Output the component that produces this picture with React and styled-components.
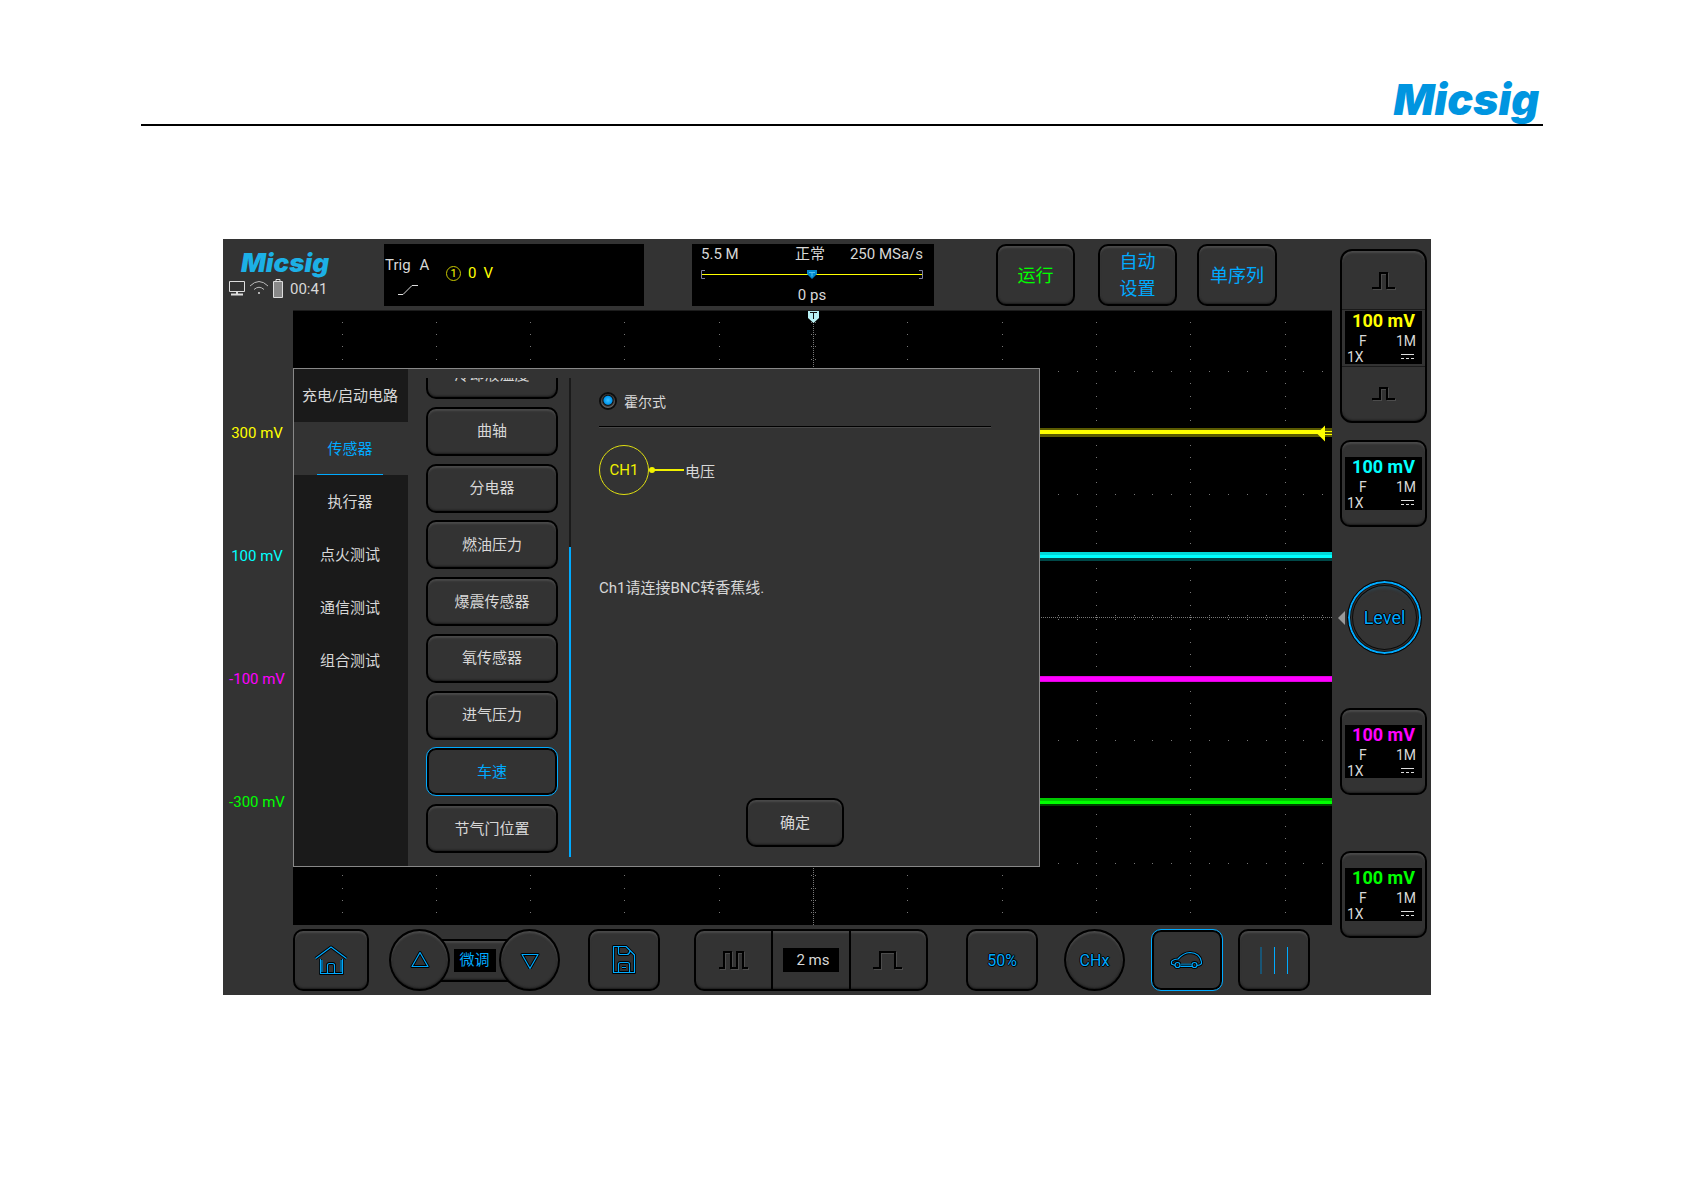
import React, { useState } from 'react';
import styled, { createGlobalStyle, css } from 'styled-components';

const colors = {
	accent: '#00aaff',
	panel: '#333333',
	dark: '#1a1a1a',
	text: '#d8d8d8',
	ch1: '#ffff00',
	ch2: '#00ffff',
	ch3: '#ff00ff',
	ch4: '#00ff00'
};

const GlobalStyle = createGlobalStyle`
	* {
		box-sizing: border-box;
	}

	body {
		margin: 0;
		background: #fff;
		font-family: Roboto, 'Noto Sans CJK SC', sans-serif;
		font-size: 15px;
		color: ${colors.text};
	}

	button {
		margin: 0;
		padding: 0;
		border: 0;
		background: none;
		font: inherit;
		color: inherit;
		cursor: pointer;
	}

	svg {
		display: block;
	}
`;

const Page = styled.div`
	padding: 77px 142px 196px 141px;
`;

const PageHeader = styled.header`
	display: flex;
	justify-content: flex-end;
	height: 49px;
	border-bottom: 2px solid #000;
	padding-right: 4px;
`;

const Logo = styled.div`
	font-family: Inter, sans-serif;
	font-weight: 900;
	font-style: italic;
	font-size: ${props => props.$small ? 26 : 43}px;
	line-height: ${props => props.$small ? 28 : 45}px;
	color: ${props => props.$small ? '#1cb0e6' : '#0095e0'};
`;

const Device = styled.main`
	display: grid;
	grid-template-columns: 70px 1fr 99px;
	grid-template-rows: 71px auto 70px;
	margin: 113px 112px 0 82px;
	background: ${colors.panel};
`;

/* top bar */

const TopBar = styled.header`
	grid-column: 1 / 3;
	display: flex;
	align-items: flex-start;
	padding-top: 5px;
`;

const Brand = styled.div`
	width: 161px;
	padding: 5px 0 0 6px;

	${Logo} {
		padding-left: 12px;
	}
`;

const Status = styled.div`
	display: flex;
	align-items: center;
	height: 22px;
	gap: 5px;

	span {
		padding: 2px 0 0 2px;
	}
`;

const Trigger = styled.section`
	display: flex;
	align-items: flex-start;
	width: 260px;
	height: 62px;
	padding-left: 1px;
	background: #000;
`;

const TriggerName = styled.div`
	width: 61px;
	padding-top: 12px;
	line-height: 18px;

	span {
		margin-left: 9px;
	}

	svg {
		margin: 10px 0 0 13px;
	}
`;

const TriggerLevel = styled.div`
	display: flex;
	align-items: center;
	gap: 7px;
	padding-top: 20px;
	line-height: 18px;
	color: ${colors.ch1};
`;

const Source = styled.span`
	width: 15px;
	height: 15px;
	border: 1px solid #c8c800;
	border-radius: 50%;
	font-size: 11px;
	line-height: 13px;
	text-align: center;
`;

const Timebase = styled.section`
	width: 242px;
	height: 62px;
	margin-left: 48px;
	padding: 1px 11px 0 9px;
	background: #000;
	text-align: center;
`;

const TimebaseRow = styled.div`
	display: grid;
	grid-template-columns: 1fr auto 1fr;
	line-height: 18px;

	span:first-child {
		text-align: left;
	}

	span:nth-child(2) {
		padding-right: 4px;
	}

	span:last-child {
		text-align: right;
	}
`;

const Offset = styled.div`
	line-height: 18px;
`;

const Position = styled.svg`
	width: 100%;
	height: 12px;
	margin: 6px 0 5px;
`;

/* raised key */

const raised = css`
	border: 2px solid #000;
	background: ${colors.panel};
	box-shadow: inset 0 2px 2px #4a4a4a, inset 0 -1px 2px #1c1c1c;
`;

const Key = styled.button`
	${raised}
	display: flex;
	align-items: center;
	justify-content: center;
	flex: none;
	width: ${props => props.$width || 72}px;
	height: ${props => props.$height || 62}px;
	margin-left: ${props => props.$gap || 0}px;
	border-radius: ${props => props.$round ? '50%' : '10px'};

	${props => props.$active && css`
		border: 1px solid ${colors.accent};
		box-shadow: inset 0 0 0 2px #000;
		color: ${colors.accent};
	`}
`;

const RunKey = styled(Key)`
	font-size: 18px;
	line-height: 27px;
	color: ${props => props.$run ? colors.ch4 : colors.accent};
`;

const SensorKey = styled(Key)`
	padding-bottom: 3px;
`;

const Outlined = styled.span`
	font-size: ${props => props.$large ? 18 : 16}px;
	color: ${colors.accent};
	text-shadow: 1px 0 #000, -1px 0 #000, 0 1px #000, 0 -1px #000;
`;

/* scope */

const Scale = styled.div`
	display: flex;
	flex-direction: column;
	justify-content: center;
	padding-right: 2px;
`;

const ScaleLabel = styled.div`
	height: 123px;
	line-height: 123px;
	text-align: center;
	color: ${props => colors[props.$ch]};
`;

const Screen = styled.section`
	position: relative;
	height: 615px;
	background: #000;
	overflow: hidden;
`;

const Wave = styled.svg`
	width: 100%;
	height: 100%;
`;

/* sensor dialog, lies over the screen */

const Dialog = styled.section`
	position: absolute;
	top: 58px;
	left: 0;
	display: flex;
	width: 747px;
	height: 499px;
	border: 1px solid #888;
	background: ${colors.panel};
`;

const Tabs = styled.nav`
	display: flex;
	flex-direction: column;
	width: 114px;
	background: ${colors.dark};
`;

const Tab = styled.button`
	display: flex;
	flex-direction: column;
	align-items: center;
	height: 53px;
	padding: 2px 2px 0 0;
	line-height: 51px;
	white-space: nowrap;

	${props => props.$active && css`
		background: ${colors.panel};
		color: ${colors.accent};

		&::after {
			content: '';
			flex: none;
			width: 66px;
			height: 1px;
			margin-top: -1px;
			background: ${colors.accent};
		}
	`}
`;

const SensorScroll = styled.div`
	display: flex;
	align-items: flex-end;
	height: 479px;
	margin: 9px 0 0 18px;
	overflow: hidden;
`;

const SensorList = styled.div`
	display: flex;
	flex-direction: column;
	justify-content: space-between;
	height: 507px;
	padding-bottom: 4px;
`;

const ScrollTrack = styled.div`
	display: flex;
	align-items: flex-end;
	width: 2px;
	height: 100%;
	margin-left: 11px;
	background: ${colors.dark};
`;

const ScrollThumb = styled.div`
	width: 100%;
	height: 310px;
	background: ${colors.accent};
`;

const Detail = styled.div`
	display: flex;
	flex-direction: column;
	flex: 1;
	padding: 24px 48px 19px 28px;
`;

const Choice = styled.label`
	display: flex;
	align-items: center;
	gap: 7px;
	height: 34px;
	padding-bottom: 17px;
	font-size: 14px;
	border-bottom: 1px solid #000;
	box-shadow: 0 1px #484848;
`;

const Radio = styled.input`
	appearance: none;
	width: 18px;
	height: 18px;
	margin: 0;
	border: 2px solid #0c0c0c;
	border-radius: 50%;
	background: radial-gradient(circle at 50% 45%, #3cc0ff 0, #0098f0 4px, #111 5px, #666 7px);
`;

const Wiring = styled.div`
	display: flex;
	align-items: center;
	margin-top: 18px;
	height: 50px;
`;

const Probe = styled.div`
	width: 50px;
	height: 50px;
	border: 1px solid #e0e010;
	border-radius: 50%;
	line-height: 48px;
	text-align: center;
	color: #f0f000;
`;

const Hint = styled.p`
	margin: 82px 0 0;
	line-height: 22px;
`;

const Confirm = styled(SensorKey)`
	margin: auto auto 0;
`;

/* channels on the right */

const Channels = styled.aside`
	grid-column: 3;
	grid-row: 1 / 4;
	display: flex;
	flex-direction: column;
	align-items: center;
	padding: 10px 4px 0 8px;
`;

const ChannelGroup = styled.div`
	${raised}
	display: flex;
	flex-direction: column;
	width: 87px;
	height: 174px;
	border-radius: 12px;
	overflow: hidden;
`;

const StepButton = styled.button`
	display: flex;
	flex: 1;
	align-items: center;
	justify-content: center;

	&:first-child {
		padding-top: 3px;
	}
`;

const ReadoutFrame = styled.div`
	display: flex;
	justify-content: center;
	padding: 1px 0 2px;
	border-top: 1px solid #1a1a1a;
	border-bottom: 1px solid #1a1a1a;
`;

const ReadoutBox = styled.div`
	width: 77px;
	height: 53px;
	background: #000;
	font-size: 14px;
`;

const Volts = styled.div`
	height: 22px;
	font-size: 18px;
	font-weight: 700;
	line-height: 19px;
	text-align: center;
	color: ${props => colors[props.$ch]};
`;

const ReadoutRow = styled.div`
	display: flex;
	align-items: center;
	justify-content: space-between;
	height: 16px;
	padding: ${props => props.$indent ? '0 6px 0 14px' : '0 8px 0 2px'};
`;

const LevelRow = styled.div`
	display: flex;
	align-items: center;
	align-self: flex-start;
	gap: 2px;
	margin: 53px 0 53px -2px;
`;

const LevelKnob = styled.button`
	width: 75px;
	height: 75px;
	border: 1px solid #000;
	border-radius: 50%;
	box-shadow: inset 0 0 0 2px ${colors.accent}, inset 0 0 0 3px #111, inset 0 0 0 4px #333, inset 0 0 0 5px #0a0a0a, inset 0 7px 3px #2d4450;
`;

const ChannelSlot = styled.div`
	margin-top: ${props => props.$gap}px;
`;

/* bottom bar */

const BottomBar = styled.footer`
	grid-column: 1 / 3;
	display: flex;
	align-items: flex-start;
	padding: 4px 0 0 70px;
`;

const Fine = styled.div`
	display: flex;
	align-items: center;
	margin-left: 20px;
`;

const FineLink = styled.div`
	${raised}
	display: flex;
	align-items: center;
	justify-content: center;
	width: 69px;
	height: 43px;
	margin: 0 -10px;
`;

const FineLabel = styled.span`
	width: 42px;
	height: 23px;
	line-height: 23px;
	text-align: center;
	background: #000;
	color: ${colors.accent};
`;

const FineKey = styled(Key)`
	position: relative;
`;

const SweepGroup = styled.div`
	${raised}
	display: flex;
	width: 234px;
	height: 62px;
	margin-left: 34px;
	border-radius: 10px;
`;

const SweepPart = styled.button`
	display: flex;
	flex: 1;
	align-items: center;
	justify-content: center;

	& + & {
		border-left: 2px solid #000;
	}
`;

const SweepValue = styled.span`
	width: 56px;
	height: 24px;
	padding-left: 4px;
	line-height: 24px;
	text-align: center;
	background: #000;
`;

// blue line drawing with a black edge round it
const Glyph = ({ width, height, d, faint }) => (
	<svg width={width} height={height} fill='none' strokeLinejoin='round'>
		<path d={d} stroke='#000' strokeWidth='3' />
		{faint && <path d={faint} stroke='#00608f' strokeWidth='2' />}
		<path d={d} stroke={colors.accent} strokeWidth='1.2' />
	</svg>
);

const Pulse = ({ width, height, d }) => (
	<svg width={width} height={height} fill='none'>
		<path d={d} stroke='#4c4c4c' strokeWidth='2' transform='translate(1 1)' />
		<path d={d} stroke='#000' strokeWidth='2' />
	</svg>
);

const Readout = ({ ch }) => (
	<ReadoutBox>
		<Volts $ch={ch}>100 mV</Volts>
		<ReadoutRow $indent><span>F</span><span>1M</span></ReadoutRow>
		<ReadoutRow>
			<span>1X</span>
			<svg width='13' height='6' stroke='#ddd'>
				<path d='M0 .5H13' />
				<path d='M0 4.5H13' strokeDasharray='3 2' />
			</svg>
		</ReadoutRow>
	</ReadoutBox>
);

const columns = [-5, -4, -3, -2, -1, 1, 2, 3, 4, 5].map(n => Math.round(520 + n * 94.3));
const rows = [-2, -1, 1, 2].map(n => Math.round(307 + n * 123));
const minorX = Array.from({ length: 55 }, (_, i) => Math.round(520 + (i - 27) * 18.86));
const minorY = Array.from({ length: 49 }, (_, i) => Math.round(307 + (i - 24) * 12.3));

const dot = (x, y) => `M${x} ${y}h1v1h-1z`;

const gridPath = [
	...columns.flatMap(x => minorY.map(y => dot(x, y))),
	...rows.flatMap(y => minorX.map(x => dot(x, y))),
	...minorY.map(y => dot(518, y) + dot(522, y)),
	...minorX.map(x => dot(x, 305) + dot(x, 309))
].join('');

const traces = [
	{ ch: 'ch1', y: 118, bands: [['#5a5a00', 0, 9], ['#ffff00', 2, 4]] },
	{ ch: 'ch2', y: 241, bands: [['#004848', 5, 5], ['#00d8d8', 1, 6], ['#00ffff', 4, 3]] },
	{ ch: 'ch3', y: 365, bands: [['#e000e0', 1, 6], ['#ff00ff', 2, 4]] },
	{ ch: 'ch4', y: 487, bands: [['#004000', 5, 4], ['#00c800', 1, 6], ['#00ff00', 4, 3]] }
];

const ScopeScreen = () => (
	<Wave viewBox='0 0 1039 615' preserveAspectRatio='none' shapeRendering='crispEdges'>
		<path d={gridPath} fill='#777' />
		<path d='M520.5 0V615M0 307.5H1039' stroke='#777' strokeDasharray='1 1' />
		{traces.map(({ ch, y, bands }) => (
			<g key={ch}>
				{bands.map(([fill, top, height]) => (
					<rect key={fill} x='0' y={y + top} width='1039' height={height} fill={fill} />
				))}
			</g>
		))}
		<path d='M1024 123.5l8 -8v16z' fill='#ffff00' shapeRendering='auto' />
		<path d='M1032 115h7v17h-7z' fill='#000' />
		<path d='M1032 118h7v9h-7z' fill='#5a5a00' />
		<path d='M1032 121.5h7M1032 124.5h7' stroke='#ffff00' />
		<path d='M515 0h11v8l-5.5 5l-5.5 -5z' fill='#b8f0f4' shapeRendering='auto' />
		<path d='M517 2.5h7M520.5 2.5V9' stroke='#111' />
		<path d='M0 .5H1039' stroke='#1c1c1c' />
	</Wave>
);

const categories = ['充电/启动电路', '传感器', '执行器', '点火测试', '通信测试', '组合测试'];
const sensors = ['冷却液温度', '曲轴', '分电器', '燃油压力', '爆震传感器', '氧传感器', '进气压力', '车速', '节气门位置'];

const SensorDialog = () => {
	const [category, setCategory] = useState('传感器');
	const [sensor, setSensor] = useState('车速');

	return (
		<Dialog>
			<Tabs>
				{categories.map(name => (
					<Tab key={name} $active={name === category} onClick={() => setCategory(name)}>{name}</Tab>
				))}
			</Tabs>
			<SensorScroll>
				<SensorList>
					{sensors.map(name => (
						<SensorKey key={name} $width={132} $height={49} $active={name === sensor} onClick={() => setSensor(name)}>
							{name}
						</SensorKey>
					))}
				</SensorList>
				<ScrollTrack><ScrollThumb /></ScrollTrack>
			</SensorScroll>
			<Detail>
				<Choice>
					<Radio type='radio' name='sensorType' defaultChecked />
					霍尔式
				</Choice>
				<Wiring>
					<Probe>CH1</Probe>
					<svg width='36' height='6' fill='#f0f000'>
						<circle cx='3' cy='3' r='3' />
						<path d='M3 2h32v2H3z' />
					</svg>
					电压
				</Wiring>
				<Hint>Ch1请连接BNC转香蕉线.</Hint>
				<Confirm $width={98} $height={49}>确定</Confirm>
			</Detail>
		</Dialog>
	);
};

const StatusIcons = () => (
	<Status>
		<svg width='16' height='16' fill='none' stroke='#ddd'>
			<path d='M.5 1.5h15v10H.5z' />
			<path d='M8 12v2M2 14.5h12' strokeWidth='2' />
		</svg>
		<svg width='18' height='16' fill='none' stroke='#bbb'>
			<path d='M0 6Q9 -3 18 6M4 9.5Q9 5 14 9.5' />
			<circle cx='9' cy='13' r='1' fill='#ddd' stroke='none' />
		</svg>
		<svg width='10' height='19' fill='none' stroke='#ddd'>
			<path d='M1 3h8v15H1z' fill='#888' stroke='none' />
			<path d='M.5 2.5h9v16h-9zM3 2.5v-2h4v2' />
		</svg>
		<span>00:41</span>
	</Status>
);

const App = () => (
	<Page>
		<GlobalStyle />
		<PageHeader>
			<Logo>Micsig</Logo>
		</PageHeader>
		<Device>
			<TopBar>
				<Brand>
					<Logo $small>Micsig</Logo>
					<StatusIcons />
				</Brand>
				<Trigger>
					<TriggerName>
						Trig<span>A</span>
						<svg width='20' height='12' fill='none' stroke='#ddd'>
							<path d='M0 10.5h5L14 1.5h6' />
						</svg>
					</TriggerName>
					<TriggerLevel>
						<Source>1</Source>
						<span>0</span>
						<span>V</span>
					</TriggerLevel>
				</Trigger>
				<Timebase>
					<TimebaseRow>
						<span>5.5 M</span>
						<span>正常</span>
						<span>250 MSa/s</span>
					</TimebaseRow>
					<Position viewBox='0 0 222 12' fill='none'>
						<path d='M1 5.5H221' stroke='#ffff00' />
						<path d='M4 1.5H.5V9.5H4M218 1.5h3.5V9.5H218' stroke='#8080a0' />
						<path d='M106 1h10v4l-5 5l-5 -5z' fill='#0088cc' />
						<path d='M108 3.5h6M111 3.5v4' stroke='#50c0f0' />
					</Position>
					<Offset>0 ps</Offset>
				</Timebase>
				<RunKey $width={79} $gap={62} $run>运行</RunKey>
				<RunKey $width={79} $gap={23}>自动<br />设置</RunKey>
				<RunKey $width={80} $gap={20}>单序列</RunKey>
			</TopBar>

			<Scale>
				<ScaleLabel $ch='ch1'>300 mV</ScaleLabel>
				<ScaleLabel $ch='ch2'>100 mV</ScaleLabel>
				<ScaleLabel $ch='ch3'>-100 mV</ScaleLabel>
				<ScaleLabel $ch='ch4'>-300 mV</ScaleLabel>
			</Scale>
			<Screen>
				<ScopeScreen />
				<SensorDialog />
			</Screen>

			<Channels>
				<ChannelGroup>
					<StepButton aria-label='CH1 up'>
						<Pulse width={24} height={18} d='M0 16H8V1H15V16H23' />
					</StepButton>
					<ReadoutFrame><Readout ch='ch1' /></ReadoutFrame>
					<StepButton aria-label='CH1 down'>
						<Pulse width={24} height={14} d='M0 12H8V1H15V12H23' />
					</StepButton>
				</ChannelGroup>
				<ChannelSlot $gap={17}>
					<Key $width={87} $height={87}><Readout ch='ch2' /></Key>
				</ChannelSlot>
				<LevelRow>
					<svg width='7' height='14'><path d='M0 7L7 0V14z' fill='#999' /></svg>
					<LevelKnob><Outlined $large>Level</Outlined></LevelKnob>
				</LevelRow>
				<Key $width={87} $height={87}><Readout ch='ch3' /></Key>
				<ChannelSlot $gap={56}>
					<Key $width={87} $height={87}><Readout ch='ch4' /></Key>
				</ChannelSlot>
			</Channels>

			<BottomBar>
				<Key $width={76} aria-label='Home'>
					<Glyph
						width={34}
						height={30}
						d='M1.5 13.5L17 2L32.5 13.5M6.5 14V28.5H28.5V14M13.5 28V20.5Q13.5 18.5 15.5 18.5H18.5Q20.5 18.5 20.5 20.5V28'
						faint='M8 15V27M27 15V27'
					/>
				</Key>
				<Fine>
					<FineKey $width={61} $round aria-label='Up'>
						<Glyph width={20} height={18} d='M10 1.5L18 15.5H2Z' />
					</FineKey>
					<FineLink><FineLabel>微调</FineLabel></FineLink>
					<FineKey $width={61} $round aria-label='Down'>
						<Glyph width={20} height={18} d='M10 17.5L18 3.5H2Z' />
					</FineKey>
				</Fine>
				<Key $gap={28} aria-label='Save'>
					<Glyph
						width={26}
						height={30}
						d='M2.5 1.5H15L23.5 10V27.5H2.5ZM7.5 1.5V8Q7.5 9.5 9 9.5H16Q18 9.5 19 6M7.5 27.5V19.5Q7.5 17.5 9.5 17.5H16.5Q18.5 17.5 18.5 19.5V27.5M11 22.5H15'
					/>
				</Key>
				<SweepGroup>
					<SweepPart aria-label='Zoom out'>
						<Pulse width={30} height={19} d='M0 17H5V1H12V17H18V1H24V17H29' />
					</SweepPart>
					<SweepPart><SweepValue>2 ms</SweepValue></SweepPart>
					<SweepPart aria-label='Zoom in'>
						<Pulse width={30} height={19} d='M0 17H7V1H22V17H29' />
					</SweepPart>
				</SweepGroup>
				<Key $gap={38}><Outlined>50%</Outlined></Key>
				<Key $gap={26} $width={61} $round><Outlined>CHx</Outlined></Key>
				<Key $gap={26} $active aria-label='Automotive'>
					<Glyph
						width={34}
						height={18}
						d='M5 14.5L1.5 13V10.5Q3 8.5 8 8Q13 2 20 1.5Q30 2 31.5 11Q32 14 27.5 14.5M10.5 15.5H22M5 14a2.5 2.5 0 1 0 5 0a2.5 2.5 0 1 0 -5 0M22 14a2.5 2.5 0 1 0 5 0a2.5 2.5 0 1 0 -5 0'
						faint='M11 13.5H21.5'
					/>
				</Key>
				<Key $gap={15} aria-label='Menu'>
					<svg width='28' height='27'>
						<path d='M1 0V27' stroke='#0078b8' />
						<path d='M14.5 0V27M27.5 0V27' stroke={colors.accent} />
					</svg>
				</Key>
			</BottomBar>
		</Device>
	</Page>
);

export default App;
